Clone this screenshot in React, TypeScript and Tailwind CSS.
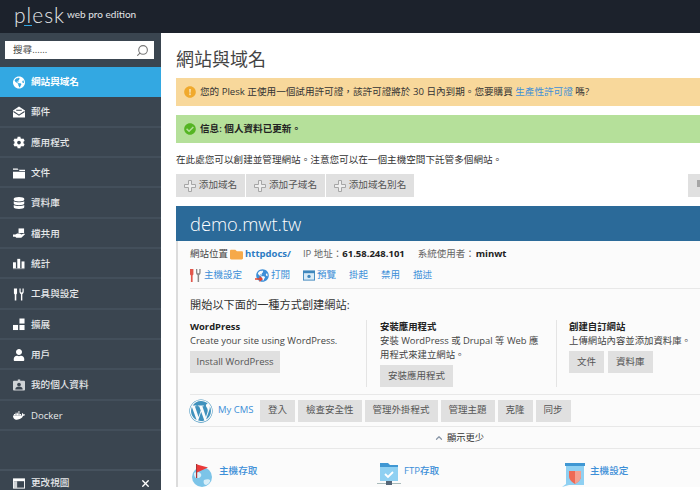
import { Search, X, ChevronUp } from "lucide-react";
import {
  FaGlobeAmericas,
  FaCog,
  FaFolder,
  FaDatabase,
  FaUser,
  FaDocker,
  FaWordpress,
  FaCheckCircle,
  FaExclamationCircle,
} from "react-icons/fa";

const cjk = "font-['Open_Sans','Noto_Sans_CJK_TC',sans-serif]";

const Mail = () => (
  <svg viewBox="0 0 13 12" className="w-[13px] h-[12px]">
    <path d="M6.5 0L13 4.5V12H0V4.5z" fill="white" />
    <path d="M0.5 5.5l6 4 6-4M3.5 4.2h6" fill="none" stroke="#3a4550" strokeWidth="1.1" />
  </svg>
);

const FolderIcon = () => (
  <svg viewBox="0 0 13 11" className="w-[13px] h-[11px]" fill="white">
    <path d="M0 0h5l1 1.5H0z" />
    <path d="M6.5 1.500H13v1.300H7zM0 3.600h13V11H0z" />
  </svg>
);

const Share = () => (
  <svg viewBox="0 0 13 11" className="w-[13px] h-[11px]" fill="white">
    <path d="M6 0h6v5H6z" />
    <path d="M0 6.5h2.500l2-1h3l1.500 1 3-1 1 .8-4 3.700H3.500l-1-1H0z" />
  </svg>
);

const Bars = () => (
  <svg viewBox="0 0 14 12" className="w-[13px] h-[12px]" fill="white">
    <rect x="0" y="4" width="3.4" height="7" />
    <rect x="5" y="0" width="3.4" height="11" />
    <rect x="10" y="3" width="3.4" height="8" />
    <rect x="0" y="11.2" width="13.4" height="0.8" opacity="0.6" />
  </svg>
);

const Tools = ({ left = "white", right = "white" }: { left?: string; right?: string }) => (
  <svg viewBox="0 0 13 13" className="w-[13px] h-[13px]">
    <path d="M1 0h3.400v5.500L3.600 6.400V13H1.900V6.400L1 5.500z" fill={left} />
    <path d="M7 0h1.300v3.200c0 .7.400 1.100 1 1.100s1-.4 1-1.100V0h1.300v3.600c0 1.300-.8 2.300-1.500 2.600V13H8.600V6.200C7.800 5.900 7 4.900 7 3.600z" fill={right} />
  </svg>
);

const Blocks = () => (
  <svg viewBox="0 0 13 13" className="w-[13px] h-[13px]" fill="white">
    <rect x="0" y="7" width="5.5" height="5.5" />
    <rect x="7" y="7" width="5.5" height="5.5" />
    <rect x="7" y="0" width="5.5" height="5.5" />
  </svg>
);

const Profile = () => (
  <svg viewBox="0 0 13 12" className="w-[13px] h-[12px]">
    <rect x="0" y="1.5" width="13" height="10.5" rx="1" fill="#cfd3d6" />
    <rect x="5.2" y="0" width="2.6" height="3" fill="#cfd3d6" />
    <circle cx="6.5" cy="5.5" r="2" fill="#3a4550" />
    <path d="M2.500 11c0-2.500 1.800-3 4-3s4 .5 4 3z" fill="#3a4550" />
  </svg>
);

const ViewIcon = () => (
  <svg viewBox="0 0 13 11" className="w-[13px] h-[11px]">
    <rect x="0.5" y="0.5" width="12" height="10" fill="none" stroke="white" />
    <rect x="0.5" y="0.5" width="12" height="2.5" fill="white" />
    <rect x="1" y="3" width="3.5" height="7.5" fill="#cfd3d6" />
  </svg>
);

const HollowPlus = () => (
  <svg viewBox="0 0 12 12" className="w-[12px] h-[12px] shrink-0">
    <path d="M4.500 0.500h3v4h4v3h-4v4h-3v-4h-4v-3h4z" fill="#eeeeee" stroke="#a6a6a6" />
  </svg>
);

const OpenIcon = () => (
  <span className="relative w-[14px] h-[13px] flex">
    <FaGlobeAmericas size={13} color="#3d8fd8" className="ml-[1px]" />
    <svg viewBox="0 0 8 6" className="absolute left-0 bottom-0 w-[8px] h-[6px]">
      <path d="M0 2.200h4.500V0L8 3 4.500 6V3.800H0z" fill="#e8452f" />
    </svg>
  </span>
);

const Preview = () => (
  <svg viewBox="0 0 13 11" className="w-[12px] h-[11px]">
    <rect x="0" y="0" width="13" height="11" fill="#3f87bd" />
    <rect x="1" y="3" width="11" height="7" fill="#d9ebf7" />
    <circle cx="6.5" cy="6.5" r="1.8" fill="#3f87bd" />
  </svg>
);

const HostIcon = () => (
  <svg viewBox="0 0 24 24" className="w-[24px] h-[24px]">
    <circle cx="12" cy="14" r="10" fill="#7cc4e8" />
    <path d="M4 10c3-2 6-1 7 1s-1 4-3 4-4 0-4-5zM14 17c2-1 5-1 6 0s-2 5-4 5-3-3-2-5z" fill="#d8eef8" />
    <rect x="6" y="1" width="1.2" height="14" fill="#a33" />
    <path d="M7 1.500l11 3-11 5z" fill="#ea3a3a" />
  </svg>
);

const FtpIcon = () => (
  <svg viewBox="0 0 24 24" className="w-[24px] h-[24px]">
    <path d="M3 0h8l2 2h8v16H3z" fill="#3f97d3" />
    <rect x="3" y="4" width="18" height="14" fill="#8fd0f2" />
    <path d="M8 11l3 3 5-5" fill="none" stroke="white" strokeWidth="1.8" />
    <rect x="0" y="20" width="24" height="1" fill="#aabbbb" />
    <rect x="9" y="18" width="6" height="4" fill="#556677" />
  </svg>
);

const ShieldIcon = () => (
  <svg viewBox="0 0 23 24" className="w-[23px] h-[24px]">
    <rect x="3" y="0" width="20" height="3" fill="#3f97d3" />
    <path d="M4 3h18v19H7l-7 2 4-3z" fill="#8fd0f2" />
    <path d="M7 8h12v5c0 4-3 6-6 8-3-2-6-4-6-8z" fill="#ee6a55" />
    <path d="M13 8h6v5c0 4-3 6-6 8z" fill="#f4a090" />
  </svg>
);

const menu = [
  { label: "網站與域名", icon: <FaGlobeAmericas size={13} color="white" />, active: true },
  { label: "郵件", icon: <Mail /> },
  { label: "應用程式", icon: <FaCog size={13} color="white" /> },
  { label: "文件", icon: <FolderIcon /> },
  { label: "資料庫", icon: <FaDatabase size={12} color="white" /> },
  { label: "檔共用", icon: <Share /> },
  { label: "統計", icon: <Bars /> },
  { label: "工具與設定", icon: <Tools /> },
  { label: "擴展", icon: <Blocks /> },
  { label: "用戶", icon: <FaUser size={12} color="white" /> },
  { label: "我的個人資料", icon: <Profile /> },
  { label: "Docker", icon: <FaDocker size={13} color="white" /> },
];

const GrayButton = ({ label, px = "px-2" }: { label: string; px?: string }) => (
  <div className={`h-[22px] flex items-center bg-[#e0e0e0] text-[9.5px] text-[#555] whitespace-nowrap ${px}`}>{label}</div>
);

const AddButton = ({ label, w }: { label: string; w: string }) => (
  <div className={`h-[23px] flex items-center justify-center gap-[3px] bg-[#e0e0e0] text-[9.6px] text-[#555] ${w}`}>
    <HollowPlus />
    {label}
  </div>
);

const Sidebar = () => (
  <div className="w-[161px] shrink-0 bg-[#3a4550] flex flex-col">
    <div className="h-[34px] pl-[5px] flex items-center">
      <div className="w-[149px] h-[18px] bg-white flex items-center justify-between pl-2 pr-[5px] text-[9.6px] text-[#444]">
        搜尋......
        <Search size={13} color="#777" className="scale-x-[-1]" />
      </div>
    </div>
    {menu.map((item) => (
      <div
        key={item.label}
        className={`h-[30.33px] shrink-0 flex items-center gap-[6px] pl-[13px] text-[9.6px] ${
          item.active
            ? "bg-[#33a8e2] text-white font-bold"
            : "pt-[2px] text-[#e6e8ea] font-medium border-b-2 border-[#434f5b]"
        }`}
      >
        <span className="w-[12px] flex justify-center">{item.icon}</span>
        {item.label}
      </div>
    ))}
    <div className="flex-1" />
    <div className="h-[21px] flex items-center pt-[5px] pl-[13px] pr-[10px] gap-[6px] text-[9.6px] font-medium text-[#e6e8ea] border-t-2 border-[#46525e]">
      <span className="w-[12px] flex justify-center"><ViewIcon /></span>
      更改視圖
      <X size={11} color="white" strokeWidth={3} className="ml-auto" />
    </div>
  </div>
);

export default function App() {
  return (
    <div className={`w-[700px] h-[490px] overflow-hidden flex flex-col bg-white ${cjk}`}>
      <div className="h-[33px] shrink-0 bg-[#1c222c] flex items-center pl-[14px] text-[#e4e6e8]">
        <div className="relative w-[53px] text-[21px] leading-none font-['Lato',sans-serif] font-light tracking-[1px] -mt-[5px]">
          plesk
          <div className="absolute left-[10px] top-[21px] w-[8px] h-[1.5px] bg-[#33a8e2]" />
        </div>
        <div className="text-[10px] font-['Lato',sans-serif] -mt-[4px]">web pro edition</div>
      </div>
      <div className="flex-1 flex min-h-0">
        <Sidebar />
        <div className="flex-1 min-w-0 pl-[15px] overflow-hidden">
          <h1 className="text-[18px] leading-[24px] mt-[14px] text-[#444]">網站與域名</h1>
          <div className="mt-[7px] h-[28px] bg-[#f8d89b] flex items-center gap-[4px] pl-[8px] text-[9.6px] text-[#333]">
            <FaExclamationCircle size={12} color="#f0a92c" />
            <span>您的 Plesk 正使用一個試用許可證，該許可證將於 30 日內到期。您要購買 <span className="text-[#3d8fd8]">生產性許可證</span> 嗎?</span>
          </div>
          <div className="mt-[9px] h-[28px] bg-[#b5e09a] flex items-center gap-[4px] pl-[8px] text-[9.6px] text-[#222] font-semibold">
            <FaCheckCircle size={12} color="#55b523" />
            信息: 個人資料已更新。
          </div>
          <p className="mt-[9px] text-[9.6px] leading-[15px] text-[#333]">在此處您可以創建並管理網站。注意您可以在一個主機空間下託管多個網站。</p>
          <div className="mt-[7px] flex gap-px relative">
            <AddButton label="添加域名" w="w-[69px]" />
            <AddButton label="添加子域名" w="w-[79px]" />
            <AddButton label="添加域名別名" w="w-[88px]" />
            <div className="absolute left-[512px] top-0 w-[12px] h-[23px] bg-[#e0e0e0]">
              <div className="absolute left-[9px] top-[6px] w-[3px] h-[7px] bg-[#a6a6a6]" />
            </div>
          </div>
          <div className="mt-[9px] bg-[#fbfbfb] border-l-2 border-[#dcdcdc]">
            <div className="h-[35px] -ml-[2px] bg-[#2b6a99] flex items-center pl-[14px] text-[18.3px] font-light text-white">demo.mwt.tw</div>
            <div className="pl-[12px]">
              <div className="h-[27px] flex items-center text-[9.5px] text-[#444]">
                網站位置
                <FaFolder size={13} color="#f6a94a" className="ml-[2px] mr-[2px]" />
                <span className="text-[#2e7cc4] font-bold">httpdocs/</span>
                <span className="ml-[12px] text-[#666]">IP 地址：</span>
                <span className="font-bold text-[#222]">61.58.248.101</span>
                <span className="ml-[13px] text-[#666]">系統使用者：</span>
                <span className="ml-[1px] font-bold text-[#222]">minwt</span>
              </div>
              <div className="h-[21px] flex items-center text-[9.5px] text-[#3d8fd8] border-b border-[#e8e8e8] pb-[5px] gap-[13px]">
                <span className="flex items-center gap-[2px] -ml-[1px]"><Tools left="#e2574c" right="#8a8a8a" />主機設定</span>
                <span className="flex items-center gap-[2px]"><OpenIcon />打開</span>
                <span className="flex items-center gap-[2px]"><Preview />預覽</span>
                <span>掛起</span>
                <span>禁用</span>
                <span>描述</span>
              </div>
              <p className="mt-[8px] text-[11.2px] leading-[16px] text-[#333]">開始以下面的一種方式創建網站:</p>
              <div className="mt-[7px] flex h-[67px]">
                <div className="w-[176px] text-[9.4px] leading-[14px] text-[#444]">
                  <div className="font-bold text-[#222]">WordPress</div>
                  <div>Create your site using WordPress.</div>
                  <div className="mt-[3px] inline-flex"><GrayButton label="Install WordPress" px="px-[6.5px]" /></div>
                </div>
                <div className="w-[190px] pl-[13px] pr-[10px] border-l border-[#e4e4e4] text-[9.4px] leading-[14px] text-[#444]">
                  <div className="font-bold text-[#222]">安裝應用程式</div>
                  <div className="whitespace-nowrap">安裝 WordPress 或 Drupal 等 Web 應<br />用程式來建立網站。</div>
                  <div className="mt-[3px] inline-flex"><GrayButton label="安裝應用程式" /></div>
                </div>
                <div className="pl-[12px] border-l border-[#e4e4e4] text-[9.4px] leading-[14px] text-[#444]">
                  <div className="font-bold text-[#222]">創建自訂網站</div>
                  <div className="whitespace-nowrap">上傳網站內容並添加資料庫。</div>
                  <div className="mt-[3px] flex gap-[4px]"><GrayButton label="文件" /><GrayButton label="資料庫" /></div>
                </div>
              </div>
              <div className="mt-[7px] h-[33px] flex items-center border-y border-[#e8e8e8]">
                <FaWordpress size={24} color="#3f91bd" className="-ml-[1px]" />
                <span className="ml-[5px] w-[42px] text-[9.5px] text-[#3d8fd8]">My CMS</span>
                <div className="flex gap-[3px]">
                  {["登入", "檢查安全性", "管理外掛程式", "管理主題", "克隆", "同步"].map((b) => (
                    <GrayButton key={b} label={b} />
                  ))}
                </div>
              </div>
              <div className="h-[22px] pl-[28px] flex items-center justify-center gap-[3px] text-[9.3px] text-[#333] border-b border-[#e8e8e8]">
                <ChevronUp size={10} strokeWidth={3} color="#8a97a8" />
                顯示更少
              </div>
              <div className="mt-[14px] flex text-[9.6px] text-[#3d8fd8] font-medium">
                <div className="w-[187px] flex gap-[5px]"><HostIcon /><span className="mt-[1px]">主機存取</span></div>
                <div className="w-[185px] flex gap-[3px]"><FtpIcon /><span className="mt-[1px]">FTP存取</span></div>
                <div className="flex gap-[5px]"><ShieldIcon /><span className="mt-[1px]">主機設定</span></div>
              </div>
            </div>
          </div>
        </div>
      </div>
    </div>
  );
}
